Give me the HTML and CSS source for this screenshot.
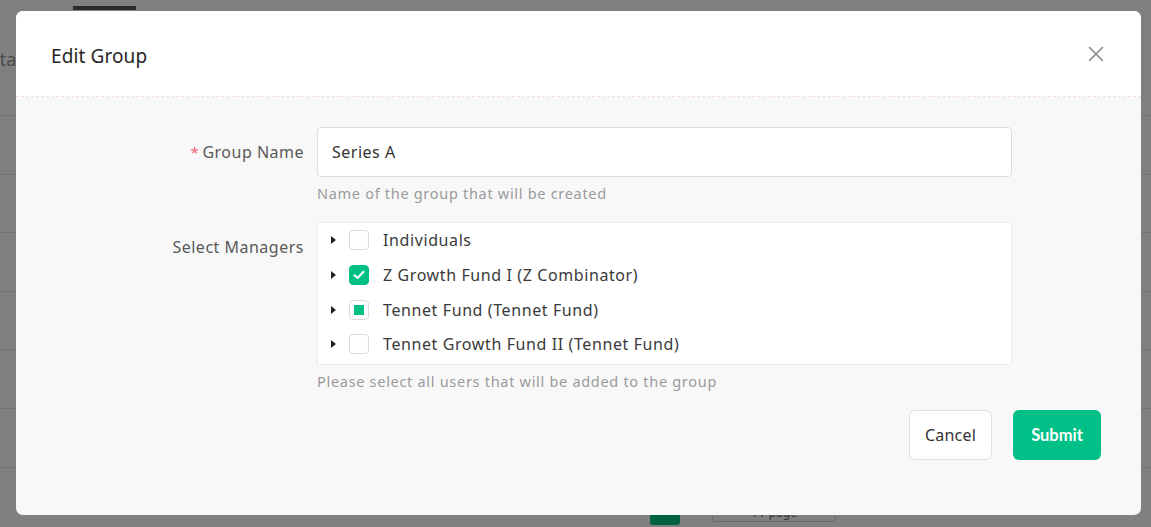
FILE: index.html
```html
<!DOCTYPE html>
<html lang="en">
<head>
<meta charset="utf-8">
<title>Edit Group</title>
<link rel="stylesheet" href="styles.css">
</head>
<body>
<div class="page">
  <div class="page-top">
    <div class="tab-bar"></div>
  </div>
  <div class="page-title">Total</div>
  <div class="page-rows">
    <div class="page-row"></div>
    <div class="page-row"></div>
    <div class="page-row"></div>
    <div class="page-row"></div>
    <div class="page-row"></div>
    <div class="page-row"></div>
    <div class="page-row"></div>
  </div>
  <div class="page-pager">
    <span class="pager-btn"></span>
    <span class="pager-box">1 / page</span>
  </div>
</div>

<div class="overlay">
  <div class="modal">
    <div class="modal-header">
      <h2 class="modal-title">Edit Group</h2>
      <button class="modal-close" aria-label="Close">
        <svg width="16" height="16" viewBox="0 0 16 16"><path d="M1.5 1.5 L14.5 14.5 M14.5 1.5 L1.5 14.5" stroke="#8a8a8a" stroke-width="1.6" fill="none" stroke-linecap="round"/></svg>
      </button>
    </div>
    <div class="modal-body">
      <div class="form-row">
        <label class="form-label"><span class="req">*</span>Group Name</label>
        <div class="form-control">
          <input class="text-input" type="text" value="Series A">
          <div class="help">Name of the group that will be created</div>
        </div>
      </div>
      <div class="form-row">
        <label class="form-label tall">Select Managers</label>
        <div class="form-control">
          <div class="tree">
            <div class="tree-row">
              <span class="caret"></span>
              <span class="cb"></span>
              <span class="tree-text">Individuals</span>
            </div>
            <div class="tree-row">
              <span class="caret"></span>
              <span class="cb checked"><svg width="12" height="10" viewBox="0 0 12 10"><path d="M1.5 5.2 L4.6 8 L10.5 1.8" stroke="#fff" stroke-width="2" fill="none" stroke-linecap="round" stroke-linejoin="round"/></svg></span>
              <span class="tree-text">Z Growth Fund I (Z Combinator)</span>
            </div>
            <div class="tree-row">
              <span class="caret"></span>
              <span class="cb partial"><span class="dot"></span></span>
              <span class="tree-text">Tennet Fund (Tennet Fund)</span>
            </div>
            <div class="tree-row">
              <span class="caret"></span>
              <span class="cb"></span>
              <span class="tree-text">Tennet Growth Fund II (Tennet Fund)</span>
            </div>
          </div>
          <div class="help">Please select all users that will be added to the group</div>
        </div>
      </div>
      <div class="actions">
        <button class="btn btn-cancel">Cancel</button>
        <button class="btn btn-submit">Submit</button>
      </div>
    </div>
  </div>
</div>
</body>
</html>
```

FILE: styles.css
```css
* { box-sizing: border-box; }
html, body { margin: 0; padding: 0; }
body {
  width: 1151px;
  height: 527px;
  overflow: hidden;
  background: #808080;
  font-family: "Noto Sans", "Open Sans", "Liberation Sans", sans-serif;
  position: relative;
}

/* dimmed page behind the modal */
.page { height: 527px; }
.page-top { height: 20px; padding: 6px 0 0 73px; }
.tab-bar { width: 63px; height: 4px; background: #2b2b2b; }
.page-title {
  margin-left: -20px;
  padding-top: 28px;
  font-size: 18px;
  line-height: 22px;
  color: #4a4a4a;
  height: 52px;
}
.page-rows { padding-top: 43px; }
.page-row { height: 58.6px; border-top: 1px solid #747474; }
.page-pager {
  position: absolute;
  left: 650px;
  top: 505px;
  display: flex;
  gap: 32px;
}
.pager-btn { width: 30px; height: 17px; background: #00623f; border-radius: 3px; margin-top: 3px; }
.pager-box {
  width: 124px; height: 17px;
  border: 1px solid #6a6a6a;
  border-radius: 4px;
  font-size: 12px; color: #333; text-align: center; line-height: 14px;
}

.overlay {
  position: absolute;
  inset: 0;
  padding: 11px 10px 12px 16px;
}
.modal {
  width: 1125px;
  height: 504px;
  background: #f8f8f8;
  border-radius: 7px;
  overflow: hidden;
  display: flex;
  flex-direction: column;
}
.modal-header {
  height: 86px;
  background: #fff;
  border-bottom: 1px dashed #f6dde2;
  display: flex;
  align-items: center;
  justify-content: space-between;
  padding: 0 37px 0 35px;
  flex-shrink: 0;
}
.modal-title {
  margin: 0;
  font-size: 19px;
  font-weight: 400;
  color: #262626;
  letter-spacing: 0.1px;
  padding-top: 4px;
}
.modal-close {
  border: 0; background: none; padding: 0;
  width: 16px; height: 16px;
  display: flex;
}

.modal-body {
  padding: 30px 40px 0 0;
  display: flex;
  flex-direction: column;
}
.form-row {
  display: grid;
  grid-template-columns: 301px 695px;
  margin-bottom: 18px;
}
.form-label {
  text-align: right;
  padding-right: 13px;
  font-size: 16px;
  color: #595959;
  line-height: 50px;
  height: 50px;
  letter-spacing: 0.5px;
}
.req { color: #f0646f; margin-right: 3px; font-size: 15px; }
.text-input {
  display: block;
  width: 695px;
  height: 50px;
  border: 1px solid #dcdcdc;
  border-radius: 4px;
  background: #fff;
  padding: 0 14px;
  font-family: inherit;
  font-size: 16px;
  letter-spacing: 0.5px;
  color: #333;
  outline: none;
}
.help {
  margin-top: 5px;
  font-size: 14.5px;
  color: #9b9b9b;
  line-height: 22px;
  letter-spacing: 0.7px;
}
.tree {
  border: 1px solid #f5e8ea;
  background: #fff;
  padding: 0 0 2px;
}
.tree-row {
  height: 34.7px;
  display: flex;
  align-items: center;
  padding-left: 13px;
}
.caret {
  width: 0; height: 0;
  border-top: 4px solid transparent;
  border-bottom: 4px solid transparent;
  border-left: 5px solid #222;
  margin-right: 13px;
}
.cb {
  width: 20px; height: 20px;
  border: 1px solid #dadada;
  border-radius: 4px;
  background: #fff;
  display: flex;
  align-items: center;
  justify-content: center;
  margin-right: 14px;
}
.cb.checked { background: #00bf85; border-color: #00bf85; }
.cb .dot { width: 10px; height: 10px; background: #00bf85; }
.tree-text { font-size: 16px; color: #3a3a3a; letter-spacing: 0.6px; }

.actions {
  display: flex;
  justify-content: flex-end;
  gap: 21px;
  padding-right: 0;
  margin-top: 0;
}
.btn {
  height: 50px;
  border-radius: 6px;
  font-family: inherit;
  font-size: 16px;
  cursor: pointer;
}
.btn-cancel {
  width: 83px;
  background: #fff;
  border: 1px solid #e6dcdc;
  color: #333;
  letter-spacing: 0.2px;
}
.btn-submit {
  width: 88px;
  background: #00c087;
  border: 0;
  color: #fff;
  font-weight: 700;
  font-size: 16.5px;
  font-family: "Lato", "Noto Sans", sans-serif;
}
```
